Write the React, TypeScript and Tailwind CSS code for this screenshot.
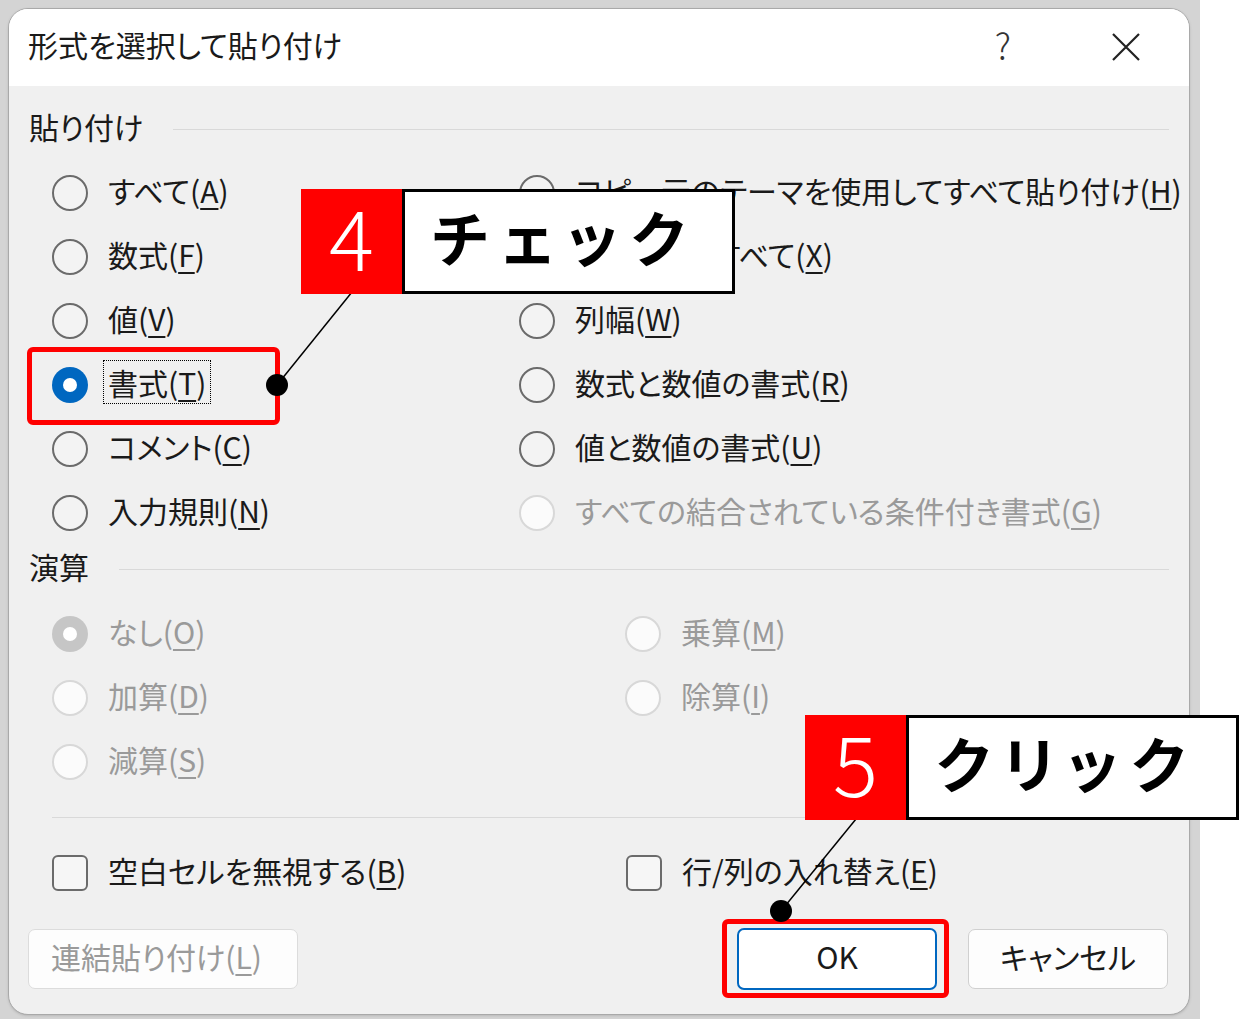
import React from 'react';

type Opt = {
  pre: string;
  k: string;
  checked?: boolean;
  disabled?: boolean;
  focused?: boolean;
};

const pasteLeft: Opt[] = [
  { pre: 'すべて', k: 'A' },
  { pre: '数式', k: 'F' },
  { pre: '値', k: 'V' },
  { pre: '書式', k: 'T', checked: true, focused: true },
  { pre: 'コメント', k: 'C' },
  { pre: '入力規則', k: 'N' },
];

const pasteRight: Opt[] = [
  { pre: 'コピー元のテーマを使用してすべて貼り付け', k: 'H' },
  { pre: '罫線を除くすべて', k: 'X' },
  { pre: '列幅', k: 'W' },
  { pre: '数式と数値の書式', k: 'R' },
  { pre: '値と数値の書式', k: 'U' },
  { pre: 'すべての結合されている条件付き書式', k: 'G', disabled: true },
];

const ops: (Opt | null)[] = [
  { pre: 'なし', k: 'O', checked: true, disabled: true },
  { pre: '乗算', k: 'M', disabled: true },
  { pre: '加算', k: 'D', disabled: true },
  { pre: '除算', k: 'I', disabled: true },
  { pre: '減算', k: 'S', disabled: true },
  null,
];

const Radio = ({ checked, disabled }: { checked?: boolean; disabled?: boolean }) => {
  if (checked) {
    return (
      <span
        className={`flex h-[36px] w-[36px] shrink-0 items-center justify-center rounded-full ${
          disabled ? 'bg-[#c6c6c6]' : 'bg-[#0067c0]'
        }`}
      >
        <span className="h-[14px] w-[14px] rounded-full bg-white" />
      </span>
    );
  }
  return (
    <span
      className={`h-[36px] w-[36px] shrink-0 rounded-full border-2 ${
        disabled ? 'border-[#d8d8d8] bg-[#fbfbfb]' : 'border-[#6b6b6b] bg-[#f3f3f3]'
      }`}
    />
  );
};

const Label = ({ o }: { o: Opt }) => (
  <span
    className={`-mt-[6px] border px-[4px] py-[6px] ${
      o.focused ? 'border-dotted border-black' : 'border-transparent'
    } ${o.disabled ? 'text-[#9a9a9a]' : 'text-[#1a1a1a]'}`}
  >
    {o.pre}(<span className="underline decoration-2 underline-offset-[5px]">{o.k}</span>)
  </span>
);

const Row = ({ o }: { o: Opt | null }) => (
  <div className="flex h-[64px] items-center gap-[15px]">
    {o && (
      <>
        <Radio checked={o.checked} disabled={o.disabled} />
        <Label o={o} />
      </>
    )}
  </div>
);

const Section = ({ title, h, gap }: { title: string; h: string; gap: string }) => (
  <div className={`flex items-center pl-[20px] pr-[20px] text-[#1a1a1a] ${h}`}>
    <span className="-mt-[6px]">{title}</span>
    <span className={`h-px flex-1 bg-[#d9d9d9] ${gap}`} />
  </div>
);

const Check = ({ pre, k }: { pre: string; k: string }) => (
  <div className="flex h-[64px] items-center gap-[15px]">
    <span className="h-[36px] w-[36px] shrink-0 rounded-[6px] border-2 border-[#6b6b6b] bg-[#f6f6f6]" />
    <span className="-mt-[6px] border border-transparent px-[4px] text-[#1a1a1a]">
      {pre}(<span className="underline decoration-2 underline-offset-[5px]">{k}</span>)
    </span>
  </div>
);

const Callout = ({ n, text, x, y }: { n: string; text: string; x: string; y: string }) => (
  <div className={`absolute flex h-[105px] ${x} ${y}`}>
    <div className="flex w-[101px] items-center justify-center bg-[#ff0000] pb-[14px] text-[84px] font-light leading-none text-white">
      {n}
    </div>
    <div className="flex w-[333px] items-center border-[3px] border-black bg-white pb-[12px] pl-[27px] text-[60px] font-bold leading-none tracking-[13px] text-black">
      {text}
    </div>
  </div>
);

export default function App() {
  return (
    <div className="relative flex h-[1019px] w-[1240px] overflow-hidden bg-white font-['Noto_Sans_CJK_JP','Noto_Sans',sans-serif] text-[30px] leading-none [font-feature-settings:'palt']">
      <div className="h-[1019px] w-[1200px] bg-[#d4d4d4] pl-[8px] pt-[8px]">
        <div className="flex h-[1007px] w-[1182px] flex-col overflow-hidden rounded-[20px] border border-[#a9a9a9] bg-[#f0f0f0] shadow">
          {/* title bar */}
          <div className="flex h-[77px] shrink-0 items-center bg-white pb-[8px] pl-[19px] pr-[48px]">
            <span className="flex-1 text-[#1a1a1a]">形式を選択して貼り付け</span>
            <span className="mr-[100px] text-[36px] font-light text-[#333]">?</span>
            <svg width="30" height="30" viewBox="0 0 30 30" className="mt-[6px]">
              <path d="M2 2 L28 28 M28 2 L2 28" stroke="#222" strokeWidth="2.2" />
            </svg>
          </div>

          <div className="flex flex-col pt-[13px]">
            <Section title="貼り付け" h="h-[60px]" gap="ml-[30px]" />
            <div className="mt-[2px] grid grid-cols-[467px_1fr] pl-[43px]">
              <div className="flex flex-col">
                {pasteLeft.map((o) => (
                  <Row key={o.k} o={o} />
                ))}
              </div>
              <div className="flex flex-col">
                {pasteRight.map((o) => (
                  <Row key={o.k} o={o} />
                ))}
              </div>
            </div>

            <Section title="演算" h="h-[48px]" gap="ml-[30px]" />
            <div className="mt-[9px] grid grid-cols-[573px_1fr] pl-[43px]">
              {ops.map((o, i) => (
                <Row key={i} o={o} />
              ))}
            </div>

            <div className="ml-[43px] mr-[22px] mt-[23px] h-px bg-[#d9d9d9]" />

            <div className="mt-[23px] grid grid-cols-[574px_1fr] pl-[43px]">
              <Check pre="空白セルを無視する" k="B" />
              <Check pre="行/列の入れ替え" k="E" />
            </div>

            <div className="mt-[23px] flex items-center pl-[19px] pr-[21px]">
              <div className="flex h-[60px] w-[270px] items-center rounded-[7px] border border-[#dcdcdc] bg-[#fdfdfd] pb-[6px] pl-[22px] text-[#9a9a9a]">
                連結貼り付け(<span className="underline decoration-2 underline-offset-[5px]">L</span>)
              </div>
              <div className="flex-1" />
              <div className="flex h-[62px] w-[200px] items-center justify-center rounded-[7px] border-2 border-[#0067c0] bg-white pb-[6px] text-[#1a1a1a]">
                OK
              </div>
              <div className="ml-[31px] flex h-[60px] w-[200px] items-center justify-center rounded-[7px] border border-[#d0d0d0] bg-[#fdfdfd] pb-[6px] text-[#1a1a1a]">
                キャンセル
              </div>
            </div>
          </div>
        </div>
      </div>

      {/* highlight boxes */}
      <div className="absolute left-[27px] top-[347px] h-[78px] w-[253px] rounded-[6px] border-[5px] border-[#ff0000]" />
      <div className="absolute left-[722px] top-[919px] h-[79px] w-[227px] rounded-[6px] border-[5px] border-[#ff0000]" />

      {/* leader lines */}
      <svg className="absolute left-0 top-0" width="1240" height="1019" viewBox="0 0 1240 1019">
        <line x1="352" y1="292" x2="277" y2="385" stroke="#000" strokeWidth="1.5" />
        <circle cx="277" cy="385" r="11" fill="#000" />
        <line x1="856" y1="819" x2="781" y2="911" stroke="#000" strokeWidth="1.5" />
        <circle cx="781" cy="911" r="11" fill="#000" />
      </svg>

      <Callout n="4" text="チェック" x="left-[301px]" y="top-[189px]" />
      <Callout n="5" text="クリック" x="left-[805px]" y="top-[715px]" />
    </div>
  );
}
